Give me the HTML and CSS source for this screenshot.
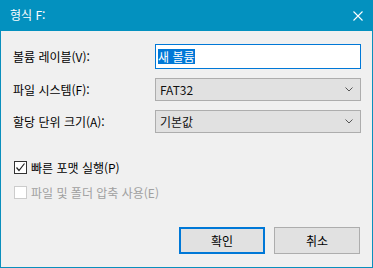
FILE: index.html
```html
<!DOCTYPE html>
<html lang="ko">
<head>
  <meta charset="UTF-8" />
  <title>형식 F:</title>
  <link rel="stylesheet" href="styles.css">
</head>
<body>

  <div class="window">
    <!-- title bar -->
    <div class="title-bar">
      <span class="title">형식 F:</span>
      <svg class="close" width="10" height="10" viewBox="0 0 10 10">
        <path d="M0.5 0.5 L9.5 9.5 M9.5 0.5 L0.5 9.5" stroke="#fff" stroke-width="1.1" fill="none" />
      </svg>
    </div>

    <div class="content">
      <div class="form">
        <label class="label">볼륨 레이블(V):</label>
        <div class="textbox"><span class="selected">새 볼륨</span></div>

        <label class="label">파일 시스템(F):</label>
        <div class="select">
          <span>FAT32</span>
          <svg width="8" height="5" viewBox="0 0 8 5"><polyline points="0.5,0.5 4,4 7.5,0.5" stroke="#555" fill="none" /></svg>
        </div>

        <label class="label">할당 단위 크기(A):</label>
        <div class="select">
          <span>기본값</span>
          <svg width="8" height="5" viewBox="0 0 8 5"><polyline points="0.5,0.5 4,4 7.5,0.5" stroke="#555" fill="none" /></svg>
        </div>
      </div>

      <div class="checks">
        <div class="check">
          <span class="box checked">
            <svg width="11" height="11" viewBox="0 0 11 11"><polyline points="1.5,5.5 4,8.5 9.5,1.5" stroke="#222" stroke-width="1.2" fill="none" /></svg>
          </span>
          <span>빠른 포맷 실행(P)</span>
        </div>
        <div class="check disabled">
          <span class="box"></span>
          <span>파일 및 폴더 압축 사용(E)</span>
        </div>
      </div>

      <div class="buttons">
        <button class="btn default">확인</button>
        <button class="btn">취소</button>
      </div>
    </div>
  </div>

</body>
</html>
```

FILE: styles.css
```css
body {
  margin: 0;
  background-color: #f0f0f0;
  font-family: "Noto Sans CJK KR", "Noto Sans", sans-serif;
  font-size: 12px;
  line-height: 16px;
  color: #000;
}

.window {
  width: 373px;
  height: 268px;
  box-sizing: border-box;
  border: 1px solid #0a8fbd;
  border-top: none;
  background-color: #f0f0f0;
  display: flex;
  flex-direction: column;
}

/* title bar */
.title-bar {
  height: 31px;
  margin: 0 -1px;
  background-color: #0391bf;
  display: flex;
  align-items: center;
  justify-content: space-between;
  padding: 0 10px 0 10px;
  color: white;
}

.title {
  font-size: 12px;
  margin-top: -1px;
}

.content {
  padding: 13px 11px 0 11px;
}

/* form rows */
.form {
  display: grid;
  grid-template-columns: 143px 206px;
  row-gap: 9px;
  align-items: center;
}

.label {
  padding-left: 1px;
}

.textbox {
  height: 25px;
  box-sizing: border-box;
  border: 1px solid #0078d7;
  background-color: white;
  padding: 3px 2px;
  display: flex;
  align-items: center;
}

.selected {
  background-color: #0078d7;
  color: white;
  line-height: 15px;
  padding-right: 1px;
}

.select {
  height: 23px;
  box-sizing: border-box;
  border: 1px solid #adadad;
  background-color: #e1e1e1;
  display: flex;
  align-items: center;
  justify-content: space-between;
  padding: 0 7px 0 4px;
  color: #111;
}

/* checkboxes */
.checks {
  margin-top: 28px;
  display: flex;
  flex-direction: column;
  gap: 12px;
}

.check {
  height: 13px;
  display: flex;
  align-items: center;
  gap: 4px;
  padding-left: 2px;
}

.box {
  width: 13px;
  height: 13px;
  box-sizing: border-box;
  border: 1px solid #333;
  background-color: white;
  display: flex;
  align-items: center;
  justify-content: center;
}

.check.disabled {
  color: #a0a0a0;
}

.check.disabled .box {
  border-color: #ccc;
}

/* buttons */
.buttons {
  margin-top: 28px;
  display: flex;
  justify-content: flex-end;
  gap: 9px;
  padding-right: 1px;
}

.btn {
  width: 86px;
  height: 27px;
  box-sizing: border-box;
  border: 1px solid #adadad;
  background-color: #e1e1e1;
  font-family: inherit;
  font-size: 12px;
  color: #000;
  padding: 0;
}

.btn.default {
  border: 2px solid #0078d7;
}
```
